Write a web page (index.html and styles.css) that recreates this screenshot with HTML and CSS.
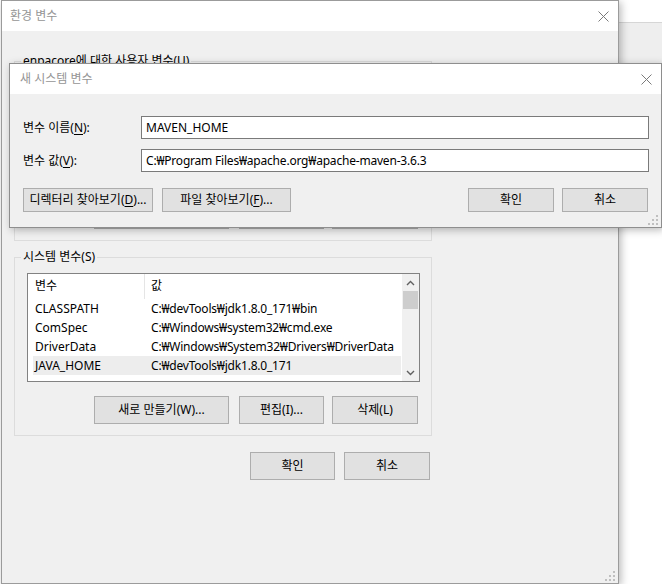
FILE: index.html
```html
<!DOCTYPE html>
<html lang="ko">
<head>
<meta charset="utf-8">
<title>환경 변수</title>
<link rel="stylesheet" href="styles.css">
</head>
<body>
<div class="bgwin"></div>

<div class="win win-main">
  <div class="titlebar">
    <span class="title">환경 변수</span>
    <svg class="close" viewBox="0 0 11 11"><path d="M0.5 0.5L10.5 10.5M10.5 0.5L0.5 10.5"/></svg>
  </div>
  <div class="main-body">
    <fieldset class="group group-user">
      <legend>enpacore에 대한 사용자 변수(U)</legend>
      <div class="list list-user">
        <div class="list-main">
          <div class="list-head"><span class="hc1"></span><span class="hc2"></span></div>
        </div>
      </div>
      <div class="btnrow">
        <span class="btn btn-new"></span>
        <span class="btn btn-edit"></span>
        <span class="btn btn-del"></span>
      </div>
    </fieldset>

    <fieldset class="group group-sys">
      <legend>시스템 변수(S)</legend>
      <div class="list">
        <div class="list-main">
          <div class="list-head"><span class="hc1">변수</span><span class="hc2">값</span></div>
          <div class="row"><span class="c1">CLASSPATH</span><span class="c2">C:₩devTools₩jdk1.8.0_171₩bin</span></div>
          <div class="row"><span class="c1">ComSpec</span><span class="c2">C:₩Windows₩system32₩cmd.exe</span></div>
          <div class="row"><span class="c1">DriverData</span><span class="c2">C:₩Windows₩System32₩Drivers₩DriverData</span></div>
          <div class="row row-sel"><span class="c1">JAVA_HOME</span><span class="c2">C:₩devTools₩jdk1.8.0_171</span></div>
        </div>
        <div class="vscroll">
          <div class="sb-btn"><svg viewBox="0 0 9 6"><path d="M1 5L4.5 1.5L8 5"/></svg></div>
          <div class="sb-thumb"></div>
          <div class="sb-track"></div>
          <div class="sb-btn"><svg viewBox="0 0 9 6"><path d="M1 1L4.5 4.5L8 1"/></svg></div>
        </div>
      </div>
      <div class="btnrow">
        <button class="btn btn-new">새로 만들기(W)...</button>
        <button class="btn btn-edit">편집(I)...</button>
        <button class="btn btn-del">삭제(L)</button>
      </div>
    </fieldset>

    <div class="footer">
      <button class="btn btn-ok">확인</button>
      <button class="btn btn-cancel">취소</button>
    </div>
  </div>
  <svg class="grip" viewBox="0 0 10 10"><path d="M8 0h2v2h-2zM4 4h2v2h-2zM8 4h2v2h-2zM0 8h2v2h-2zM4 8h2v2h-2zM8 8h2v2h-2z"/></svg>
</div>

<div class="win win-new">
  <div class="titlebar">
    <span class="title">새 시스템 변수</span>
    <svg class="close" viewBox="0 0 11 11"><path d="M0.5 0.5L10.5 10.5M10.5 0.5L0.5 10.5"/></svg>
  </div>
  <div class="new-body">
    <div class="field">
      <label class="flabel">변수 이름(<u>N</u>):</label>
      <div class="input">MAVEN_HOME</div>
    </div>
    <div class="field">
      <label class="flabel">변수 값(<u>V</u>):</label>
      <div class="input path">C:₩Program Files₩apache.org₩apache-maven-3.6.3</div>
    </div>
    <div class="new-btns">
      <button class="btn btn-dir">디렉터리 찾아보기(<u>D</u>)...</button>
      <button class="btn btn-file">파일 찾아보기(<u>F</u>)...</button>
      <span class="spacer"></span>
      <button class="btn btn-ok2">확인</button>
      <button class="btn btn-cancel2">취소</button>
    </div>
  </div>
  <svg class="grip" viewBox="0 0 10 10"><path d="M8 0h2v2h-2zM4 4h2v2h-2zM8 4h2v2h-2zM0 8h2v2h-2zM4 8h2v2h-2zM8 8h2v2h-2z"/></svg>
</div>
</body>
</html>
```

FILE: styles.css
```css
* { box-sizing: border-box; }
html, body { margin: 0; padding: 0; }
body {
  width: 662px;
  height: 584px;
  overflow: hidden;
  position: relative;
  background: #ffffff;
  font-family: "Noto Sans", "Noto Sans CJK KR", sans-serif;
  font-size: 12px;
  line-height: 16px;
  color: #000;
}
u { text-decoration: underline; text-underline-offset: 2px; }

.bgwin {
  position: absolute;
  left: 560px;
  top: 22px;
  width: 110px;
  height: 120px;
  background: #eeeeee;
  border-top: 1px solid #d6d6d6;
}

.win {
  position: absolute;
  display: flex;
  flex-direction: column;
  background: #f0f0f0;
  border: 1px solid #9b9b9b;
  box-shadow: 2px 2px 8px rgba(0, 0, 0, 0.28);
}
.win-main { left: 1px; top: 0; width: 618px; height: 584px; }
.win-new { left: 9px; top: 63px; width: 653px; height: 165px; border-color: #8e8e8e; }

.titlebar {
  flex: none;
  height: 30px;
  display: flex;
  align-items: center;
  justify-content: space-between;
  background: #ffffff;
}
.win-main .titlebar { padding: 0 9px 0 8px; }
.win-new .titlebar { padding: 0 9px 0 10px; }
.title { color: #959595; }
.close { width: 11px; height: 11px; }
.close path { stroke: #7a7a7a; stroke-width: 1; fill: none; }

.grip { position: absolute; right: 3px; bottom: 2px; width: 10px; height: 10px; }
.grip path { fill: #bfbfbf; }

/* main dialog body */
.main-body {
  padding: 22px 0 0 12px;
  display: flex;
  flex-direction: column;
  align-items: flex-start;
}
.group {
  margin: 0;
  width: 418px;
  min-width: 0;
  padding: 8px 11px 11px 12px;
  border: 1px solid #dcdcdc;
}
.group legend {
  padding: 0 2px;
  margin-left: -6px;
  line-height: 16px;
}
.group-sys { margin-top: 8px; }

.list {
  height: 109px;
  border: 1px solid #828282;
  background: #ffffff;
  display: flex;
  overflow: hidden;
}
.list-user { height: 110px; }
.list-main { flex: 1; display: flex; flex-direction: column; min-width: 0; }
.list-head { height: 25px; display: flex; flex: none; }
.hc1 { width: 116px; padding-left: 7px; line-height: 24px; }
.hc2 { flex: 1; padding-left: 6px; border-left: 1px solid #e5e5e5; line-height: 24px; }
.row {
  height: 19px;
  margin: 0 1px 0 5px;
  display: flex;
  align-items: center;
  white-space: nowrap;
}
.row .c1 { width: 111px; padding-left: 2px; flex: none; }
.row .c2 { padding-left: 7px; letter-spacing: -0.2px; }
.row-sel { background: #ededed; }

.vscroll {
  width: 17px;
  flex: none;
  display: flex;
  flex-direction: column;
  background: #f0f0f0;
}
.sb-btn { height: 17px; display: flex; align-items: center; justify-content: center; }
.sb-btn svg { width: 9px; height: 6px; }
.sb-btn path { stroke: #606060; stroke-width: 1.4; fill: none; }
.sb-thumb { height: 18px; margin: 0 1px; background: #cdcdcd; }
.sb-track { flex: 1; }

.btn {
  font: inherit;
  color: #000;
  background: #e1e1e1;
  border: 1px solid #adadad;
  border-radius: 0;
  padding: 0;
  margin: 0;
  text-align: center;
  white-space: nowrap;
}
.btnrow {
  margin-top: 14px;
  padding-right: 2px;
  display: flex;
  justify-content: flex-end;
}
.btnrow .btn { height: 28px; }
.btn-new { width: 135px; }
.btn-edit { width: 85px; margin-left: 10px; }
.btn-del { width: 86px; margin-left: 8px; }

.footer {
  width: 418px;
  margin-top: 16px;
  padding-right: 2px;
  display: flex;
  justify-content: flex-end;
}
.footer .btn { height: 28px; }
.btn-ok { width: 85px; }
.btn-cancel { width: 86px; margin-left: 9px; }

/* new variable dialog */
.new-body {
  flex: 1;
  padding: 22px 12px 0 13px;
  display: flex;
  flex-direction: column;
}
.field { display: flex; align-items: center; }
.field + .field { margin-top: 10px; }
.flabel { width: 118px; flex: none; }
.input {
  flex: 1;
  height: 23px;
  border: 1px solid #7a7a7a;
  background: #ffffff;
  padding-left: 4px;
  display: flex;
  align-items: center;
  white-space: nowrap;
}
.input.path { letter-spacing: -0.2px; }
.new-btns {
  margin-top: 16px;
  padding-right: 1px;
  display: flex;
}
.new-btns .btn { height: 24px; }
.btn-dir { width: 130px; }
.btn-file { width: 129px; margin-left: 9px; }
.spacer { flex: 1; }
.btn-ok2 { width: 86px; }
.btn-cancel2 { width: 86px; margin-left: 8px; }
```
